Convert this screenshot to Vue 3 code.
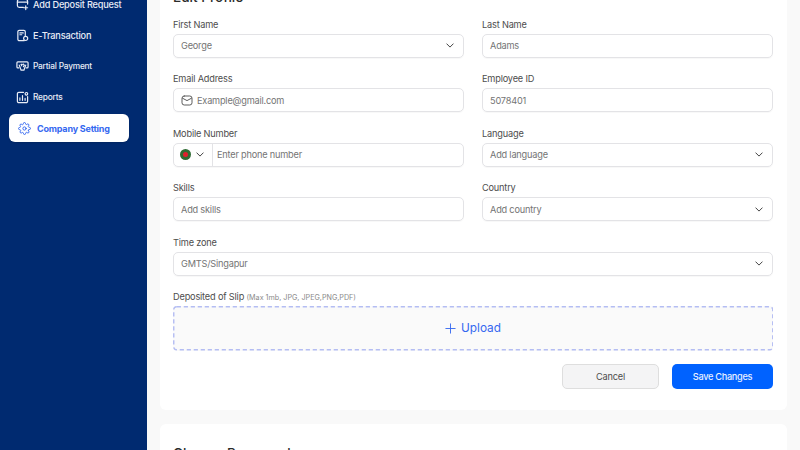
<template>
  <div class="app">
    <aside class="sidebar">
      <nav class="nav">
        <div v-for="item in navItems" :key="item.label" class="nav-item" :class="item.size">
          <svg class="nav-icon" viewBox="0 0 14 14" fill="none" stroke="currentColor" stroke-width="1.3" stroke-linecap="round" stroke-linejoin="round">
            <path v-for="d in item.paths" :key="d" :d="d" />
          </svg>
          <span>{{ item.label }}</span>
        </div>
        <div class="nav-item active">
          <svg class="nav-icon" viewBox="0 0 24 24" fill="none" stroke="currentColor" stroke-width="1.8" stroke-linecap="round" stroke-linejoin="round">
            <circle cx="12" cy="12" r="3" />
            <path d="M19.4 15a1.65 1.65 0 0 0 .33 1.82l.06.06a2 2 0 1 1-2.83 2.83l-.06-.06a1.65 1.65 0 0 0-2.8 1.17V21a2 2 0 1 1-4 0v-.09a1.65 1.65 0 0 0-2.8-1.17l-.06.06a2 2 0 1 1-2.83-2.83l.06-.06a1.65 1.65 0 0 0-1.17-2.8H3a2 2 0 1 1 0-4h.09a1.65 1.65 0 0 0 1.17-2.8l-.06-.06a2 2 0 1 1 2.83-2.83l.06.06a1.65 1.65 0 0 0 2.8-1.17V3a2 2 0 1 1 4 0v.09a1.65 1.65 0 0 0 2.8 1.17l.06-.06a2 2 0 1 1 2.83 2.83l-.06.06a1.65 1.65 0 0 0 1.17 2.8H21a2 2 0 1 1 0 4h-.09a1.65 1.65 0 0 0-1.51 1z" />
          </svg>
          <span>Company Setting</span>
        </div>
      </nav>
    </aside>

    <main class="main">
      <section class="card profile">
        <h2 class="card-title">Edit Profile</h2>
        <div class="grid">
          <div class="field">
            <label>First Name</label>
            <div class="control between"><span>George</span><svg class="chev" viewBox="0 0 10 6"><path d="M1 1l4 4 4-4" /></svg></div>
          </div>
          <div class="field">
            <label>Last Name</label>
            <div class="control"><span>Adams</span></div>
          </div>
          <div class="field">
            <label>Email Address</label>
            <div class="control with-icon">
              <svg class="mail" viewBox="0 0 12 11" fill="none" stroke="#5c5c5c" stroke-width="1" stroke-linejoin="round" stroke-linecap="round">
                <rect x="1" y="1" width="10" height="9" rx="2.2" />
                <path d="M1.5 3.2L6 5.6l4.5-2.4" />
              </svg>
              <span>Example@gmail.com</span>
            </div>
          </div>
          <div class="field">
            <label>Employee ID</label>
            <div class="control"><span>5078401</span></div>
          </div>
          <div class="field">
            <label>Mobile Number</label>
            <div class="control phone">
              <div class="country">
                <span class="flag"><i></i></span>
                <svg class="chev" viewBox="0 0 10 6"><path d="M1 1l4 4 4-4" /></svg>
              </div>
              <span class="phone-text">Enter phone number</span>
            </div>
          </div>
          <div class="field">
            <label>Language</label>
            <div class="control between"><span>Add language</span><svg class="chev" viewBox="0 0 10 6"><path d="M1 1l4 4 4-4" /></svg></div>
          </div>
          <div class="field">
            <label>Skills</label>
            <div class="control"><span>Add skills</span></div>
          </div>
          <div class="field">
            <label>Country</label>
            <div class="control between"><span>Add country</span><svg class="chev" viewBox="0 0 10 6"><path d="M1 1l4 4 4-4" /></svg></div>
          </div>
          <div class="field wide">
            <label>Time zone</label>
            <div class="control between"><span>GMTS/Singapur</span><svg class="chev" viewBox="0 0 10 6"><path d="M1 1l4 4 4-4" /></svg></div>
          </div>
          <div class="field wide">
            <label>Deposited of Slip <small>(Max 1mb, JPG, JPEG,PNG,PDF)</small></label>
            <div class="upload">
              <svg class="dash" width="100%" height="100%"><rect x="0.75" y="0.75" width="599" height="43" rx="3" /></svg>
              <svg class="plus" viewBox="0 0 12 12"><path d="M6 .5v11M.5 6h11" /></svg>
              <span>Upload</span>
            </div>
          </div>
        </div>
        <div class="actions">
          <button class="btn cancel">Cancel</button>
          <button class="btn save">Save Changes</button>
        </div>
      </section>

      <section class="card password">
        <h2 class="card-title">Change Password</h2>
      </section>
    </main>
  </div>
</template>

<script setup>
const navItems = [
  {
    label: 'Add Deposit Request',
    paths: ['M12.5 6.5V3.5a2 2 0 0 0-2-2h-7a2 2 0 0 0-2 2v4.5a2 2 0 0 0 2 2h4.5', 'M1.5 4.5h11', 'M10.5 8.5v4M8.5 10.5h4']
  },
  {
    label: 'E-Transaction',
    paths: ['M9 12.5H3.5a1.5 1.5 0 0 1-1.5-1.5V3a1.5 1.5 0 0 1 1.5-1.5h5A1.5 1.5 0 0 1 10 3v4', 'M4.2 4.2h3.6M4.2 6.2h2', 'M12.6 10.2a2.2 2.2 0 1 1-4.4 0 2.2 2.2 0 0 1 4.4 0z']
  },
  {
    label: 'Partial Payment',
    size: 'small',
    paths: ['M3 8.5H2a1 1 0 0 1-1-1V3a1 1 0 0 1 1-1h10a1 1 0 0 1 1 1v4.5a1 1 0 0 1-1 1h-1', 'M3.5 5.5l2 5.5h3l2-5.5', 'M5.4 4.6h1.4l-1 1.6M8 4.4l1 1.4-1 1.4']
  },
  {
    label: 'Reports',
    size: 'small',
    paths: ['M8 1.5H3A1.5 1.5 0 0 0 1.5 3v8A1.5 1.5 0 0 0 3 12.5h8a1.5 1.5 0 0 0 1.5-1.5V6', 'M4.2 10V7.5M7 10V5M9.8 10V8', 'M12.6 3a1.4 1.4 0 1 1-2.8 0 1.4 1.4 0 0 1 2.8 0z']
  }
]
</script>

<style>
html, body { margin: 0; }
</style>

<style scoped>
.app {
  display: flex;
  width: 800px;
  height: 450px;
  overflow: hidden;
  background: #f9f9f9;
  font-family: Inter, "Liberation Sans", sans-serif;
  color: #4d4d4d;
}
.sidebar {
  flex: 0 0 147px;
  height: 450px;
  background: #002a70;
  box-sizing: border-box;
  padding: 0 18px 0 9px;
}
.nav {
  display: flex;
  flex-direction: column;
  gap: 3px;
  margin-top: -10px;
}
.nav-item {
  display: flex;
  align-items: center;
  gap: 4px;
  height: 28px;
  padding-left: 7px;
  border-radius: 6px;
  color: #e9edf6;
  font-size: 9.2px;
  letter-spacing: -.2px;
  font-weight: 500;
  white-space: nowrap;
}
.nav-item.small { font-size: 8.3px; letter-spacing: -.2px; }
.nav-icon { width: 13px; height: 13px; flex: none; }
.nav-item.active {
  background: #fff;
  color: #3568f0;
  font-size: 9px;
  font-weight: 700;
  gap: 6px;
  padding-left: 9px;
  box-shadow: 0 1px 2px rgba(0,0,0,.15);
}
.main {
  flex: 1;
  min-width: 0;
  padding: 0 13px;
  margin-top: -20px;
  display: flex;
  flex-direction: column;
  gap: 14px;
}
.card {
  background: #fff;
  border-radius: 6px;
  flex: none;
  box-sizing: border-box;
  padding: 0 14px 0 13px;
}
.profile { height: 430px; padding-top: 8px; }
.password { height: 80px; padding-top: 20px; }
.card-title {
  margin: 0;
  font-size: 13.6px;
  line-height: 18px;
  font-weight: 500;
  color: #2b2b2b;
}
.grid {
  display: grid;
  grid-template-columns: 291px 291px;
  column-gap: 18px;
  row-gap: 14.5px;
  margin-top: 11.5px;
}
.field { display: flex; flex-direction: column; min-width: 0; }
.wide { grid-column: 1 / -1; }
label {
  font-size: 9.2px;
  letter-spacing: -.18px;
  line-height: 14px;
  height: 14px;
  margin-bottom: 2px;
  color: #4d4d4d;
  white-space: nowrap;
}
label small { font-size: 7.2px; letter-spacing: 0; color: #8a8a8a; }
.control {
  height: 24px;
  box-sizing: border-box;
  border: 1px solid #e3e3e6;
  border-radius: 5px;
  display: flex;
  align-items: center;
  padding: 0 8px 0 7px;
  font-size: 9.2px;
  letter-spacing: -.2px;
  color: #747474;
  box-shadow: 0 1px 1px rgba(0,0,0,.03);
}
.between { justify-content: space-between; }
.chev {
  width: 8px;
  height: 5px;
  fill: none;
  stroke: #3d3d3d;
  stroke-width: 1.2;
  stroke-linecap: round;
  stroke-linejoin: round;
  flex: none;
  margin-right: 1px;
}
.with-icon { gap: 4px; }
.mail { width: 12px; height: 11px; flex: none; }
.phone { padding: 0; }
.country {
  display: flex;
  align-items: center;
  gap: 5px;
  width: 39px;
  height: 100%;
  box-sizing: border-box;
  padding-left: 6px;
  border-right: 1px solid #e3e3e6;
  flex: none;
}
.flag {
  width: 11px;
  height: 11px;
  border-radius: 50%;
  background: #2f6b33;
  display: flex;
  align-items: center;
  justify-content: center;
}
.flag i { width: 5px; height: 5px; border-radius: 50%; background: #e0202c; display: block; }
.phone-text { padding-left: 4px; }
.upload {
  position: relative;
  height: 44.5px;
  box-sizing: border-box;
  border-radius: 3px;
  background: #fafafa;
  display: flex;
  align-items: center;
  justify-content: center;
  gap: 5px;
  color: #3568f0;
  font-size: 11.8px;
}
.dash {
  position: absolute;
  inset: 0;
  fill: none;
  stroke: #b4bdf3;
  stroke-width: 1.4;
  stroke-dasharray: 4.2 2.8;
}
.plus { width: 11px; height: 11px; fill: none; stroke: #3568f0; stroke-width: 1; }
.actions {
  display: flex;
  justify-content: flex-end;
  gap: 13px;
  margin-top: 13px;
}
.btn {
  height: 25px;
  box-sizing: border-box;
  border-radius: 5px;
  font-family: inherit;
  font-size: 9.2px;
  letter-spacing: -.2px;
  padding: 0;
}
.cancel { width: 97px; background: #f4f4f5; border: 1px solid #dedede; color: #4d4d4d; }
.save { width: 101px; background: #0062ff; border: none; color: #e8f0ff; font-weight: 500; letter-spacing: -.3px; }
</style>
